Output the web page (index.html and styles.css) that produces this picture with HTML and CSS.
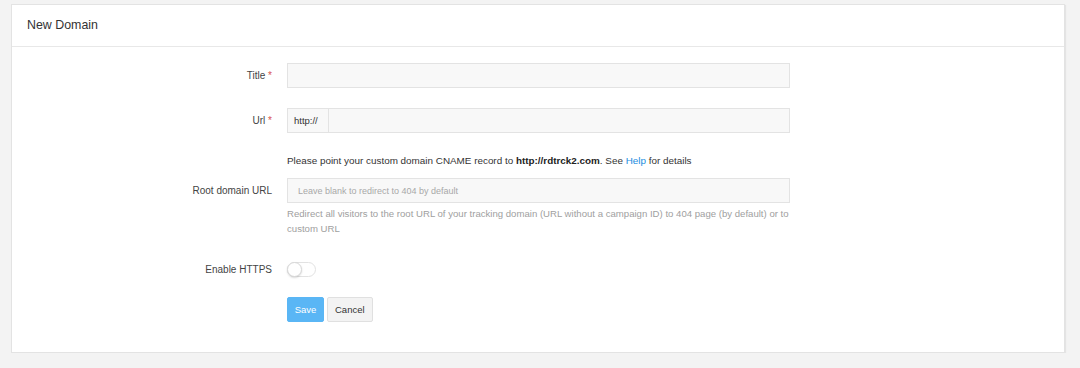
FILE: index.html
```html
<!DOCTYPE html>
<html lang="en">
<head>
    <meta charset="UTF-8">
    <meta name="viewport" content="width=device-width, initial-scale=1.0">
    <title>New Domain</title>
    <link rel="stylesheet" href="styles.css">
</head>
<body>
    <div class="card">
        <div class="card-header">New Domain</div>
        <form class="card-body">
            <div class="form-row">
                <label class="form-label">Title <span class="req">*</span></label>
                <input type="text" class="form-input">
            </div>
            <div class="form-row row-url">
                <label class="form-label">Url <span class="req">*</span></label>
                <div class="input-group">
                    <span class="addon">http://</span>
                    <input type="text" class="form-input">
                </div>
            </div>
            <div class="form-row row-note">
                <span></span>
                <p class="note">Please point your custom domain CNAME record to <b>http://rdtrck2.com</b>. See <a href="#">Help</a> for details</p>
            </div>
            <div class="form-row row-top">
                <label class="form-label">Root domain URL</label>
                <div>
                    <input type="text" class="form-input" placeholder="Leave blank to redirect to 404 by default">
                    <p class="help">Redirect all visitors to the root URL of your tracking domain (URL without a campaign ID) to 404 page (by default) or to custom URL</p>
                </div>
            </div>
            <div class="form-row row-switch">
                <label class="form-label">Enable HTTPS</label>
                <span class="switch"><span class="knob"></span></span>
            </div>
            <div class="form-row">
                <span></span>
                <div class="actions">
                    <button type="button" class="btn btn-primary">Save</button>
                    <button type="button" class="btn">Cancel</button>
                </div>
            </div>
        </form>
    </div>
</body>
</html>
```

FILE: styles.css
```css
body {
    margin: 0;
    padding: 4px 15px 0 11px;
    background-color: #f3f3f3;
    font-family: "Liberation Sans", Arial, sans-serif;
    font-size: 10px;
    color: #333;
}
.card {
    background: #fff;
    border: 1px solid #e3e3e3;
    box-shadow: 1px 1px 1px rgba(0, 0, 0, 0.06);
}
.card-header {
    height: 41px;
    line-height: 41px;
    padding-left: 15px;
    font-size: 12.4px;
    color: #333;
    border-bottom: 1px solid #e8e8e8;
}
.card-body {
    margin: 0;
    padding: 16px 0 30px;
}
.form-row {
    display: grid;
    grid-template-columns: 260px 503px;
    column-gap: 15px;
    align-items: center;
    margin-bottom: 20px;
}
.form-row:last-child {
    margin-bottom: 0;
}
.row-url {
    margin-bottom: 21px;
}
.row-note {
    margin-bottom: 10px;
}
.row-top {
    align-items: start;
    margin-bottom: 26px;
}
.row-top .form-label {
    line-height: 25px;
}
.form-label {
    text-align: right;
    color: #444;
}
.req {
    color: #d9534f;
}
.form-input {
    display: block;
    width: 100%;
    height: 25px;
    box-sizing: border-box;
    padding: 0 10px;
    background: #f8f8f8;
    border: 1px solid #e3e3e3;
    font-family: inherit;
    font-size: 9px;
    color: #555;
    outline: none;
}
.form-input::placeholder {
    color: #a8a8a8;
}
.input-group {
    display: flex;
}
.addon {
    flex: 0 0 41px;
    box-sizing: border-box;
    height: 25px;
    line-height: 23px;
    padding-left: 6px;
    background: #f8f8f8;
    border: 1px solid #e3e3e3;
    border-right: none;
    color: #333;
    font-size: 9.5px;
}
.input-group .form-input {
    flex: 1;
}
.note {
    margin: 0;
    line-height: 14px;
    font-size: 9.9px;
    color: #333;
}
.note b {
    color: #222;
}
.note a {
    color: #1b8ce0;
    text-decoration: none;
}
.help {
    margin: 3px 0 0;
    line-height: 15px;
    font-size: 9.6px;
    color: #a0a0a0;
}
.switch {
    display: block;
    position: relative;
    width: 29px;
    height: 15px;
    box-sizing: border-box;
    border: 1px solid #e2e2e2;
    border-radius: 8px;
    background: #fff;
}
.knob {
    position: absolute;
    left: -1px;
    top: -1px;
    width: 15px;
    height: 15px;
    box-sizing: border-box;
    border-radius: 50%;
    background: #fff;
    border: 1px solid #d8d8d8;
    box-shadow: 0 1px 2px rgba(0, 0, 0, 0.15);
}
.actions {
    display: flex;
    gap: 3px;
}
.btn {
    height: 25px;
    padding: 0 7px;
    border: 1px solid #e0e0e0;
    border-radius: 2px;
    background: #f3f3f3;
    color: #333;
    font-family: inherit;
    font-size: 9.5px;
    cursor: pointer;
}
.btn-primary {
    width: 37px;
    padding: 0;
    background: #5ab6f5;
    border-color: #5ab6f5;
    color: #fff;
}
```
